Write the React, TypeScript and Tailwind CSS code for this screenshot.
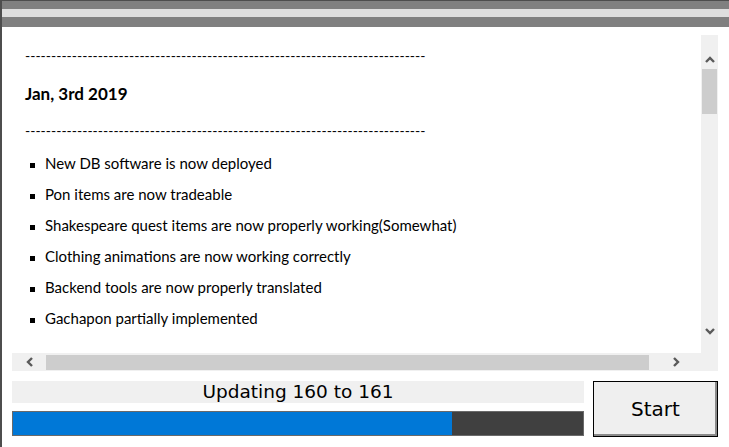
const notes = [
  'New DB software is now deployed',
  'Pon items are now tradeable',
  'Shakespeare quest items are now properly working(Somewhat)',
  'Clothing animations are now working correctly',
  'Backend tools are now properly translated',
  'Gachapon partially implemented',
];

const dashes = '-'.repeat(77);

function Chevron({ dir }: { dir: 'up' | 'down' | 'left' | 'right' }) {
  const pts = {
    up: '1,6 5,2 9,6',
    down: '1,2 5,6 9,2',
    left: '6,1 2,5 6,9',
    right: '2,1 6,5 2,9',
  }[dir];
  const vertical = dir === 'up' || dir === 'down';
  return (
    <svg
      width={vertical ? 10 : 8}
      height={vertical ? 8 : 10}
      viewBox={vertical ? '0 0 10 8' : '0 0 8 10'}
      className="block"
    >
      <polyline points={pts} fill="none" stroke="#5a5a5a" strokeWidth="2.4" />
    </svg>
  );
}

export default function App() {
  return (
    <div className="w-[729px] h-[447px] bg-white border-l-2 border-[#4d4d4d] overflow-hidden flex flex-col">
      <div className="h-px bg-[#4d4d4d]" />
      <div className="h-[8px] bg-[#808080]" />
      <div className="h-[8px] bg-[#dedede]" />
      <div className="h-[10px] bg-[#808080]" />

      <div className="ml-[10px] mt-[8px] w-[706px] h-[336px] grid grid-cols-[689px_17px] grid-rows-[318px_18px] bg-[#f0f0f0]">
        <div className="bg-white overflow-hidden pl-[13px] pt-[11px] font-['Lato',sans-serif] text-black">
          <div className="whitespace-nowrap text-[14px] leading-[20px]">{dashes}</div>
          <div className="mt-[18px] text-[17px] leading-[20px] font-bold">Jan, 3rd 2019</div>
          <div className="mt-[17px] whitespace-nowrap text-[14px] leading-[20px]">{dashes}</div>
          <ul className="mt-[7px]">
            {notes.map((n, i) => (
              <li key={i} className="flex items-center text-[15px] leading-[31px]">
                <span className="ml-[5px] mt-[3px] w-[5px] h-[5px] bg-black shrink-0" />
                <span className="ml-[10px]">{n}</span>
              </li>
            ))}
          </ul>
        </div>

        <div className="flex flex-col items-center">
          <div className="h-[34px] flex items-end pb-[5px]">
            <Chevron dir="up" />
          </div>
          <div className="w-[15px] h-[45px] bg-[#cdcdcd]" />
          <div className="flex-1" />
          <div className="h-[34px] flex items-start pt-[8px]">
            <Chevron dir="down" />
          </div>
        </div>

        <div className="flex items-center">
          <div className="w-[34px] flex justify-center pl-[2px]">
            <Chevron dir="left" />
          </div>
          <div className="w-[603px] h-[15px] bg-[#cdcdcd]" />
          <div className="flex-1 flex justify-center pl-[2px]">
            <Chevron dir="right" />
          </div>
        </div>
        <div />
      </div>

      <div className="ml-[10px] mt-[10px] flex font-['DejaVu_Sans',sans-serif] text-black">
        <div className="w-[572px] flex flex-col">
          <div className="h-[22px] bg-[#f0f0f0] flex items-center justify-center text-[18.5px] leading-none">
            Updating 160 to 161
          </div>
          <div className="mt-[8px] h-[25px] border border-[#6a6a6a] bg-[#404040] flex">
            <div className="w-[439px] bg-[#0078d7]" />
          </div>
        </div>
        <button className="ml-[9px] w-[125px] h-[56px] border border-black bg-[#efefef] shadow-[inset_-2px_-2px_0_#8a8a8a] text-[20px] leading-none">
          Start
        </button>
      </div>
    </div>
  );
}
